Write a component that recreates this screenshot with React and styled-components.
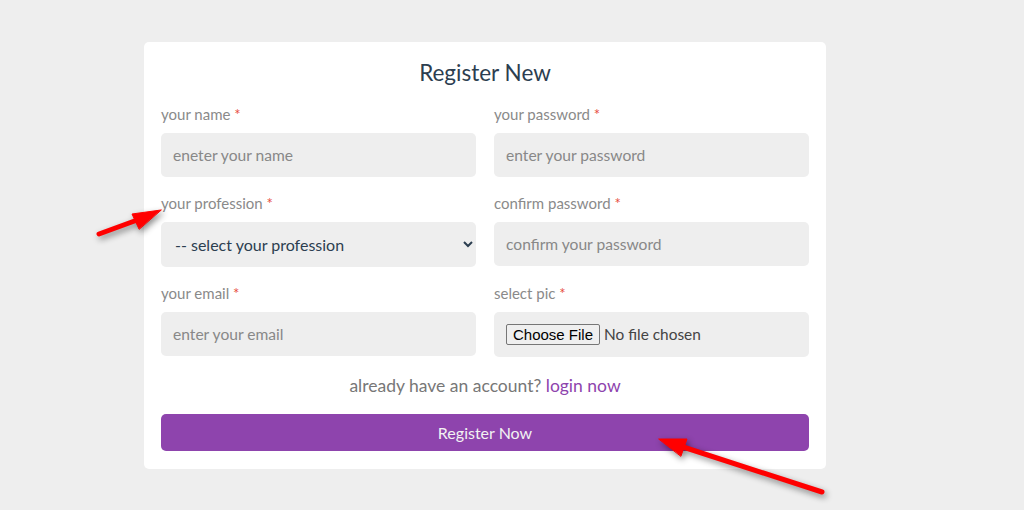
import React from "react";
import styled, { createGlobalStyle } from "styled-components";

const Global = createGlobalStyle`
  * { box-sizing: border-box; }
  html, body { margin: 0; padding: 0; }
  body {
    background: #eeeeee;
    font-family: "Lato", "Noto Sans", sans-serif;
    width: 1024px;
    height: 510px;
    overflow: hidden;
  }
`;

const Page = styled.div`
  position: relative;
  width: 1024px;
  height: 510px;
  padding: 42px 0 0 144px;
`;

const Card = styled.form`
  width: 682px;
  background: #ffffff;
  border-radius: 5px;
  padding: 17px 17px 18px;
  display: flex;
  flex-direction: column;
`;

const Title = styled.h2`
  margin: 0 0 18px;
  font-size: 22.5px;
  line-height: 28px;
  font-weight: 400;
  color: #2c3e50;
  text-align: center;
`;

const Grid = styled.div`
  display: grid;
  grid-template-columns: minmax(0, 1fr) minmax(0, 1fr);
  column-gap: 18px;
  row-gap: 17px;
`;

const Field = styled.div`
  display: flex;
  flex-direction: column;
  min-width: 0;
`;

const Label = styled.label`
  font-size: 15px;
  line-height: 18px;
  color: #8a8a8a;
  margin-bottom: 10px;
`;

const Star = styled.span`
  color: #e74c3c;
`;

const inputBase = `
  height: 44px;
  width: 100%;
  border: none;
  outline: none;
  border-radius: 5px;
  background: #eeeeee;
  font-family: "Lato", "Noto Sans", sans-serif;
  font-size: 15.6px;
`;

const Input = styled.input`
  ${inputBase}
  padding: 0 12px;
  color: #333;
  &::placeholder { color: #888; }
`;

const Select = styled.select`
  ${inputBase}
  height: 45px;
  font-size: 16px;
  padding: 0 10px;
  color: #2c3e50;
`;

const FileBox = styled.div`
  ${inputBase}
  height: 45px;
  display: flex;
  align-items: center;
  padding: 0 12px;
`;

const FileInput = styled.input`
  font-family: "Lato", "Noto Sans", sans-serif;
  font-size: 15.4px;
  color: #444;
  max-width: 100%;
  &::file-selector-button {
    font-family: "Liberation Sans", Arial, sans-serif;
    font-size: 15px;
    color: #000;
    background: #efefef;
    border: 1px solid #767676;
    border-radius: 2px;
    padding: 1px 6px;
    margin-right: 4px;
  }
`;

const Switch = styled.p`
  margin: 18px 0 0;
  font-size: 17.5px;
  line-height: 22px;
  text-align: center;
  color: #777;
`;

const Link = styled.a`
  color: #8e44ad;
  text-decoration: none;
`;

const Button = styled.button`
  margin-top: 17px;
  height: 37px;
  width: 100%;
  border: none;
  border-radius: 5px;
  background: #8e44ad;
  color: #f2f2f2;
  font-family: "Lato", "Noto Sans", sans-serif;
  font-size: 16px;
`;

const Overlay = styled.svg`
  position: absolute;
  left: 0;
  top: 0;
  width: 1024px;
  height: 510px;
  pointer-events: none;
  filter: drop-shadow(2px 3px 3px rgba(0, 0, 0, 0.45));
`;

function Req({ children, htmlFor }) {
  return (
    <Label htmlFor={htmlFor}>
      {children} <Star>*</Star>
    </Label>
  );
}

export default function App() {
  return (
    <>
      <Global />
      <Page>
        <Card onSubmit={(e) => e.preventDefault()}>
          <Title>Register New</Title>
          <Grid>
            <Field>
              <Req htmlFor="name">your name</Req>
              <Input id="name" placeholder="eneter your name" />
            </Field>
            <Field>
              <Req htmlFor="pw">your password</Req>
              <Input id="pw" type="password" placeholder="enter your password" />
            </Field>
            <Field>
              <Req htmlFor="prof">your profession</Req>
              <Select id="prof" defaultValue="">
                <option value="">-- select your profession</option>
                <option value="dev">developer</option>
                <option value="designer">designer</option>
              </Select>
            </Field>
            <Field>
              <Req htmlFor="cpw">confirm password</Req>
              <Input id="cpw" type="password" placeholder="confirm your password" />
            </Field>
            <Field>
              <Req htmlFor="email">your email</Req>
              <Input id="email" type="email" placeholder="enter your email" />
            </Field>
            <Field>
              <Req htmlFor="pic">select pic</Req>
              <FileBox>
                <FileInput id="pic" type="file" />
              </FileBox>
            </Field>
          </Grid>
          <Switch>
            already have an account? <Link href="#">login now</Link>
          </Switch>
          <Button type="submit">Register Now</Button>
        </Card>
        <Overlay viewBox="0 0 1024 510">
          <g fill="#ff0000" stroke="#ff0000" strokeLinecap="round" strokeLinejoin="round">
            <line x1="99" y1="234" x2="140" y2="219" strokeWidth="5" />
            <polygon points="161,210 132,214 139,229" strokeWidth="1" />
            <line x1="822" y1="492" x2="680" y2="446" strokeWidth="5" />
            <polygon points="659,439 687,439 681,456" strokeWidth="1" />
          </g>
        </Overlay>
      </Page>
    </>
  );
}
